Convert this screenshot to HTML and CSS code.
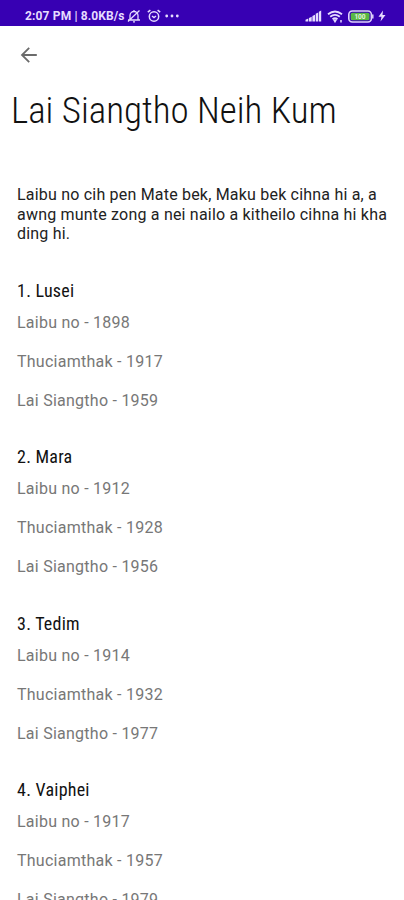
FILE: index.html
```html
<!DOCTYPE html>
<html lang="en">
<head>
<meta charset="utf-8">
<title>Lai Siangtho Neih Kum</title>
<link rel="stylesheet" href="styles.css">
</head>
<body>
<header class="status">
  <span class="clock">2:07 PM | <span class="rate">8.0KB/s</span></span>
  <svg class="bell" width="14" height="14" viewBox="0 0 14 14" fill="none" stroke="currentColor" stroke-width="1.300"><path d="M1 11h12M3 10.500V6.500a4 4 0 0 1 8 0v4M6 12.800h2M1 12.500 12.500 1.500M7 1v1.500"/></svg>
  <svg class="alarm" width="14" height="14" viewBox="0 0 14 14" fill="none" stroke="currentColor" stroke-width="1.500"><circle cx="7" cy="7.500" r="4.700"/><path d="M.8 3.200 3.400 1.200M13.200 3.200 10.600 1.200M5 7l2 1.500L9 7"/></svg>
  <svg class="dots" width="14" height="4" viewBox="0 0 14 4" fill="currentColor"><circle cx="1.700" cy="2" r="1.400"/><circle cx="7" cy="2" r="1.400"/><circle cx="12.300" cy="2" r="1.400"/></svg>
  <span class="spacer"></span>
  <svg class="signal" width="17" height="12" viewBox="0 0 17 12" fill="currentColor"><path d="M.5 9.800 3.300 8.500V11.500H.5zM4 8l2.700-1.300v4.800H4zM7.400 6 10 4.800v6.700H7.400zM10.700 3.800l2.500-1.200v8.900h-2.500zM13.900 1.800l2.300-1.200v10.900h-2.300z"/></svg>
  <svg class="wifi" width="17" height="13" viewBox="0 0 17 13" fill="none" stroke="currentColor" stroke-width="1.800"><path d="M1 4.300q7-5.500 14 0M3.200 6.800q4.800-3.800 9.600 0M5.500 9.100q2.500-2 5 0"/><path d="M7 10h2l-1 1.700zM14 10v2.500" stroke-width="1.500"/></svg>
  <svg class="battery" width="26" height="13" viewBox="0 0 26 13"><rect x=".8" y="1" width="22.600" height="11" rx="3.500" fill="#3700b3" stroke="#ded2fa" stroke-width="1.600"/><rect x="2.700" y="2.800" width="18.800" height="7.400" rx="1.500" fill="#58b844"/><path d="M24.800 4.500v4" stroke="#ded2fa" stroke-width="1.500"/><text class="charge" x="12" y="9.200" text-anchor="middle">100</text></svg>
  <svg class="bolt" width="8" height="12" viewBox="0 0 8 12" fill="currentColor"><path d="M5 .5.5 6.800h3L2.500 11.500 7.500 5h-3z"/></svg>
</header>
<nav class="toolbar">
  <svg width="18" height="18" viewBox="0 0 18 18" fill="none" stroke="#6b6b6b" stroke-width="1.800"><path d="M16.800 9H2.500M9.200 1.800 2 9l7.200 7.200"/></svg>
</nav>
<main>
  <h1>Lai Siangtho Neih Kum</h1>
  <p class="intro">Laibu no cih pen Mate bek, Maku bek cihna hi a, a<br>awng munte zong a nei nailo a kitheilo cihna hi kha<br>ding hi.</p>
  <section><h2>1. Lusei</h2><p>Laibu no - 1898</p><p>Thuciamthak - 1917</p><p>Lai Siangtho - 1959</p></section>
  <section><h2>2. Mara</h2><p>Laibu no - 1912</p><p>Thuciamthak - 1928</p><p>Lai Siangtho - 1956</p></section>
  <section><h2>3. Tedim</h2><p>Laibu no - 1914</p><p>Thuciamthak - 1932</p><p>Lai Siangtho - 1977</p></section>
  <section><h2>4. Vaiphei</h2><p>Laibu no - 1917</p><p>Thuciamthak - 1957</p><p>Lai Siangtho - 1979</p></section>
</main>
</body>
</html>
```
FILE: styles.css
```css
* { box-sizing: border-box; }
html, body { margin: 0; height: 900px; overflow: hidden; background: #fff; }
body { font-family: Roboto, "Liberation Sans", sans-serif; color: #222; }
.status { display: flex; align-items: center; height: 26px; padding: 6px 18px 0 25px; background: #3700b3; color: #e6dcff; }
.status svg { flex: none; }
.clock { font-size: 12px; font-weight: 700; line-height: 20px; letter-spacing: .15px; white-space: nowrap; width: 102px; }
.rate { letter-spacing: .1px; }
.alarm { margin-left: 6px; }
.dots { margin-left: 4px; }
.spacer { flex: 1; }
.wifi { margin-left: 5px; }
.battery { margin-left: 4px; }
.bolt { margin-left: 4px; }
.charge { font-size: 6.500px; font-weight: 700; fill: #e6f5df; }
.toolbar { display: flex; align-items: center; height: 58px; padding: 0 20px; }
main { padding: 0 17px; }
h1 { margin: 5px 0 0 -6px; height: 44px; font-family: "Roboto Condensed", Roboto, sans-serif; font-stretch: 75%; font-size: 37px; font-weight: 300; line-height: 44px; white-space: nowrap; color: #111; }
.intro { margin: 52px 0 0; font-size: 16px; line-height: 19.500px; letter-spacing: .2px; white-space: nowrap; height: 58.500px; }
section { height: 166.500px; }
.intro + section { margin-top: 34px; }
h2 { margin: 0; font-family: "Roboto Condensed", Roboto, sans-serif; font-stretch: 75%; font-size: 18px; font-weight: 400; line-height: 25px; letter-spacing: .24px; color: #111; }
section p { margin: 0; height: 39px; font-size: 16px; line-height: 39px; letter-spacing: .25px; color: #777; }
```
